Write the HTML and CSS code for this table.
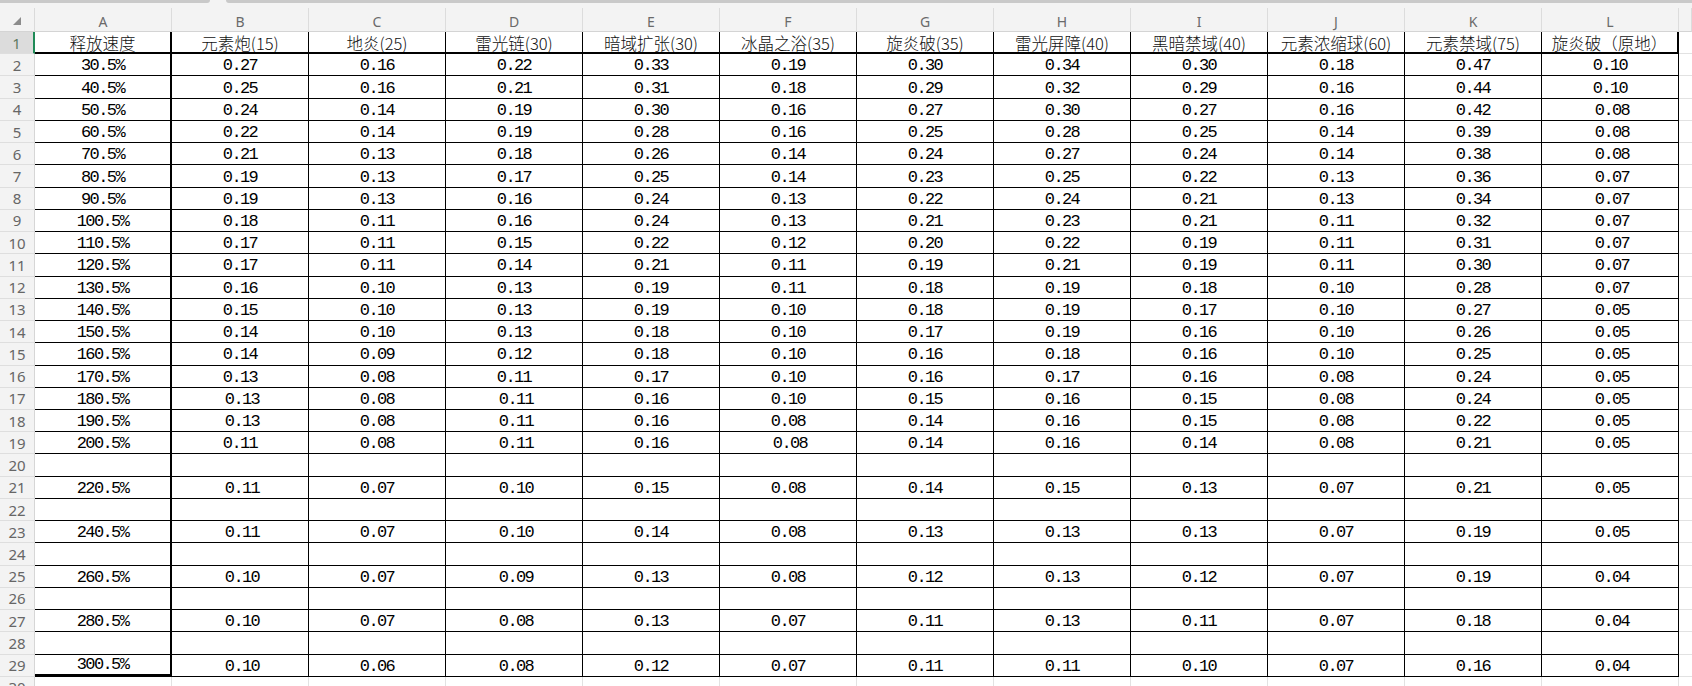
FILE: index.html
```html
<!DOCTYPE html>
<html lang="zh">
<head>
<meta charset="utf-8">
<title>释放速度</title>
<link rel="stylesheet" href="styles.css">
</head>
<body>
<div class="sheet">
  <div class="topbar"><div class="edge edge-name"></div><div class="edge edge-formula"></div></div>
  <div class="row colhead">
    <div class="corner"><span class="tri"></span></div>
    <div class="ch">A</div><div class="ch">B</div><div class="ch">C</div><div class="ch">D</div><div class="ch">E</div><div class="ch">F</div><div class="ch">G</div><div class="ch">H</div><div class="ch">I</div><div class="ch">J</div><div class="ch">K</div><div class="ch">L</div><div class="ch"></div>
  </div>
  <div class="row r1">
    <div class="rh sel">1</div>
    <div class="c a">释放速度</div><div class="c">元素炮(15)</div><div class="c">地炎(25)</div><div class="c">雷光链(30)</div><div class="c">暗域扩张(30)</div><div class="c">冰晶之浴(35)</div><div class="c">旋炎破(35)</div><div class="c">雷光屏障(40)</div><div class="c">黑暗禁域(40)</div><div class="c">元素浓缩球(60)</div><div class="c">元素禁域(75)</div><div class="c l">旋炎破（原地）</div><div class="x"></div>
  </div>
  <div class="row"><div class="rh">2</div><div class="c a">30.5%</div><div class="c">0.27</div><div class="c">0.16</div><div class="c">0.22</div><div class="c">0.33</div><div class="c">0.19</div><div class="c">0.30</div><div class="c">0.34</div><div class="c">0.30</div><div class="c">0.18</div><div class="c">0.47</div><div class="c l">0.10</div><div class="x"></div></div>
  <div class="row"><div class="rh">3</div><div class="c a">40.5%</div><div class="c">0.25</div><div class="c">0.16</div><div class="c">0.21</div><div class="c">0.31</div><div class="c">0.18</div><div class="c">0.29</div><div class="c">0.32</div><div class="c">0.29</div><div class="c">0.16</div><div class="c">0.44</div><div class="c l">0.10</div><div class="x"></div></div>
  <div class="row"><div class="rh">4</div><div class="c a">50.5%</div><div class="c">0.24</div><div class="c">0.14</div><div class="c">0.19</div><div class="c">0.30</div><div class="c">0.16</div><div class="c">0.27</div><div class="c">0.30</div><div class="c">0.27</div><div class="c">0.16</div><div class="c">0.42</div><div class="c l sh">0.08</div><div class="x"></div></div>
  <div class="row"><div class="rh">5</div><div class="c a">60.5%</div><div class="c">0.22</div><div class="c">0.14</div><div class="c">0.19</div><div class="c">0.28</div><div class="c">0.16</div><div class="c">0.25</div><div class="c">0.28</div><div class="c">0.25</div><div class="c">0.14</div><div class="c">0.39</div><div class="c l sh">0.08</div><div class="x"></div></div>
  <div class="row"><div class="rh">6</div><div class="c a">70.5%</div><div class="c">0.21</div><div class="c">0.13</div><div class="c">0.18</div><div class="c">0.26</div><div class="c">0.14</div><div class="c">0.24</div><div class="c">0.27</div><div class="c">0.24</div><div class="c">0.14</div><div class="c">0.38</div><div class="c l sh">0.08</div><div class="x"></div></div>
  <div class="row"><div class="rh">7</div><div class="c a">80.5%</div><div class="c">0.19</div><div class="c">0.13</div><div class="c">0.17</div><div class="c">0.25</div><div class="c">0.14</div><div class="c">0.23</div><div class="c">0.25</div><div class="c">0.22</div><div class="c">0.13</div><div class="c">0.36</div><div class="c l sh">0.07</div><div class="x"></div></div>
  <div class="row"><div class="rh">8</div><div class="c a">90.5%</div><div class="c">0.19</div><div class="c">0.13</div><div class="c">0.16</div><div class="c">0.24</div><div class="c">0.13</div><div class="c">0.22</div><div class="c">0.24</div><div class="c">0.21</div><div class="c">0.13</div><div class="c">0.34</div><div class="c l sh">0.07</div><div class="x"></div></div>
  <div class="row"><div class="rh">9</div><div class="c a">100.5%</div><div class="c">0.18</div><div class="c">0.11</div><div class="c">0.16</div><div class="c">0.24</div><div class="c">0.13</div><div class="c">0.21</div><div class="c">0.23</div><div class="c">0.21</div><div class="c">0.11</div><div class="c">0.32</div><div class="c l sh">0.07</div><div class="x"></div></div>
  <div class="row"><div class="rh">10</div><div class="c a">110.5%</div><div class="c">0.17</div><div class="c">0.11</div><div class="c">0.15</div><div class="c">0.22</div><div class="c">0.12</div><div class="c">0.20</div><div class="c">0.22</div><div class="c">0.19</div><div class="c">0.11</div><div class="c">0.31</div><div class="c l sh">0.07</div><div class="x"></div></div>
  <div class="row"><div class="rh">11</div><div class="c a">120.5%</div><div class="c">0.17</div><div class="c">0.11</div><div class="c">0.14</div><div class="c">0.21</div><div class="c">0.11</div><div class="c">0.19</div><div class="c">0.21</div><div class="c">0.19</div><div class="c">0.11</div><div class="c">0.30</div><div class="c l sh">0.07</div><div class="x"></div></div>
  <div class="row"><div class="rh">12</div><div class="c a">130.5%</div><div class="c">0.16</div><div class="c">0.10</div><div class="c">0.13</div><div class="c">0.19</div><div class="c">0.11</div><div class="c">0.18</div><div class="c">0.19</div><div class="c">0.18</div><div class="c">0.10</div><div class="c">0.28</div><div class="c l sh">0.07</div><div class="x"></div></div>
  <div class="row"><div class="rh">13</div><div class="c a">140.5%</div><div class="c">0.15</div><div class="c">0.10</div><div class="c">0.13</div><div class="c">0.19</div><div class="c">0.10</div><div class="c">0.18</div><div class="c">0.19</div><div class="c">0.17</div><div class="c">0.10</div><div class="c">0.27</div><div class="c l sh">0.05</div><div class="x"></div></div>
  <div class="row"><div class="rh">14</div><div class="c a">150.5%</div><div class="c">0.14</div><div class="c">0.10</div><div class="c">0.13</div><div class="c">0.18</div><div class="c">0.10</div><div class="c">0.17</div><div class="c">0.19</div><div class="c">0.16</div><div class="c">0.10</div><div class="c">0.26</div><div class="c l sh">0.05</div><div class="x"></div></div>
  <div class="row"><div class="rh">15</div><div class="c a">160.5%</div><div class="c">0.14</div><div class="c">0.09</div><div class="c">0.12</div><div class="c">0.18</div><div class="c">0.10</div><div class="c">0.16</div><div class="c">0.18</div><div class="c">0.16</div><div class="c">0.10</div><div class="c">0.25</div><div class="c l sh">0.05</div><div class="x"></div></div>
  <div class="row"><div class="rh">16</div><div class="c a">170.5%</div><div class="c">0.13</div><div class="c">0.08</div><div class="c">0.11</div><div class="c">0.17</div><div class="c">0.10</div><div class="c">0.16</div><div class="c">0.17</div><div class="c">0.16</div><div class="c">0.08</div><div class="c">0.24</div><div class="c l sh">0.05</div><div class="x"></div></div>
  <div class="row"><div class="rh">17</div><div class="c a">180.5%</div><div class="c sh">0.13</div><div class="c">0.08</div><div class="c sh">0.11</div><div class="c">0.16</div><div class="c">0.10</div><div class="c">0.15</div><div class="c">0.16</div><div class="c">0.15</div><div class="c">0.08</div><div class="c">0.24</div><div class="c l sh">0.05</div><div class="x"></div></div>
  <div class="row"><div class="rh">18</div><div class="c a">190.5%</div><div class="c sh">0.13</div><div class="c">0.08</div><div class="c sh">0.11</div><div class="c">0.16</div><div class="c">0.08</div><div class="c">0.14</div><div class="c">0.16</div><div class="c">0.15</div><div class="c">0.08</div><div class="c">0.22</div><div class="c l sh">0.05</div><div class="x"></div></div>
  <div class="row"><div class="rh">19</div><div class="c a">200.5%</div><div class="c">0.11</div><div class="c">0.08</div><div class="c sh">0.11</div><div class="c">0.16</div><div class="c sh">0.08</div><div class="c">0.14</div><div class="c">0.16</div><div class="c">0.14</div><div class="c">0.08</div><div class="c">0.21</div><div class="c l sh">0.05</div><div class="x"></div></div>
  <div class="row"><div class="rh">20</div><div class="c a"></div><div class="c"></div><div class="c"></div><div class="c"></div><div class="c"></div><div class="c"></div><div class="c"></div><div class="c"></div><div class="c"></div><div class="c"></div><div class="c"></div><div class="c l"></div><div class="x"></div></div>
  <div class="row"><div class="rh">21</div><div class="c a">220.5%</div><div class="c sh">0.11</div><div class="c">0.07</div><div class="c sh">0.10</div><div class="c">0.15</div><div class="c">0.08</div><div class="c">0.14</div><div class="c">0.15</div><div class="c">0.13</div><div class="c">0.07</div><div class="c">0.21</div><div class="c l sh">0.05</div><div class="x"></div></div>
  <div class="row"><div class="rh">22</div><div class="c a"></div><div class="c"></div><div class="c"></div><div class="c"></div><div class="c"></div><div class="c"></div><div class="c"></div><div class="c"></div><div class="c"></div><div class="c"></div><div class="c"></div><div class="c l"></div><div class="x"></div></div>
  <div class="row"><div class="rh">23</div><div class="c a">240.5%</div><div class="c sh">0.11</div><div class="c">0.07</div><div class="c sh">0.10</div><div class="c">0.14</div><div class="c">0.08</div><div class="c">0.13</div><div class="c">0.13</div><div class="c">0.13</div><div class="c">0.07</div><div class="c">0.19</div><div class="c l sh">0.05</div><div class="x"></div></div>
  <div class="row"><div class="rh">24</div><div class="c a"></div><div class="c"></div><div class="c"></div><div class="c"></div><div class="c"></div><div class="c"></div><div class="c"></div><div class="c"></div><div class="c"></div><div class="c"></div><div class="c"></div><div class="c l"></div><div class="x"></div></div>
  <div class="row"><div class="rh">25</div><div class="c a">260.5%</div><div class="c sh">0.10</div><div class="c">0.07</div><div class="c sh">0.09</div><div class="c">0.13</div><div class="c">0.08</div><div class="c">0.12</div><div class="c">0.13</div><div class="c">0.12</div><div class="c">0.07</div><div class="c">0.19</div><div class="c l sh">0.04</div><div class="x"></div></div>
  <div class="row"><div class="rh">26</div><div class="c a"></div><div class="c"></div><div class="c"></div><div class="c"></div><div class="c"></div><div class="c"></div><div class="c"></div><div class="c"></div><div class="c"></div><div class="c"></div><div class="c"></div><div class="c l"></div><div class="x"></div></div>
  <div class="row"><div class="rh">27</div><div class="c a">280.5%</div><div class="c sh">0.10</div><div class="c">0.07</div><div class="c sh">0.08</div><div class="c">0.13</div><div class="c">0.07</div><div class="c">0.11</div><div class="c">0.13</div><div class="c">0.11</div><div class="c">0.07</div><div class="c">0.18</div><div class="c l sh">0.04</div><div class="x"></div></div>
  <div class="row"><div class="rh">28</div><div class="c a"></div><div class="c"></div><div class="c"></div><div class="c"></div><div class="c"></div><div class="c"></div><div class="c"></div><div class="c"></div><div class="c"></div><div class="c"></div><div class="c"></div><div class="c l"></div><div class="x"></div></div>
  <div class="row r29"><div class="rh">29</div><div class="c a">300.5%</div><div class="c sh">0.10</div><div class="c">0.06</div><div class="c sh">0.08</div><div class="c">0.12</div><div class="c">0.07</div><div class="c">0.11</div><div class="c">0.11</div><div class="c">0.10</div><div class="c">0.07</div><div class="c">0.16</div><div class="c l sh">0.04</div><div class="x"></div></div>
  <div class="row"><div class="rh">30</div><div class="g"></div><div class="g"></div><div class="g"></div><div class="g"></div><div class="g"></div><div class="g"></div><div class="g"></div><div class="g"></div><div class="g"></div><div class="g"></div><div class="g"></div><div class="g"></div><div class="x"></div></div>
</div>
</body>
</html>
```

FILE: styles.css
```css
html, body {
  margin: 0;
  padding: 0;
  background: #ffffff;
  overflow: hidden;
}

.sheet {
  width: 1692px;
  height: 686px;
  overflow: hidden;
  background: #ffffff;
}

.topbar {
  height: 8px;
  display: flex;
  background: #f3f3f3;
}

.edge {
  height: 3px;
  background: #c9c9c9;
}

.edge-name {
  width: 210px;
  border-radius: 0 0 5px 0;
}

.edge-formula {
  flex: 1;
  margin-left: 16px;
  border-radius: 0 0 0 5px;
}

.row {
  display: grid;
  grid-template-columns: 35px repeat(12, 137px) 1fr;
  height: 22.24px;
}

.colhead {
  height: 24px;
  background: #f3f3f3;
}

.corner {
  border-right: 1px solid #dadada;
  border-bottom: 1px solid #d4d4d4;
  box-sizing: border-box;
  position: relative;
}

.tri {
  position: absolute;
  left: 13px;
  top: 9px;
  width: 0;
  height: 0;
  border-left: 8px solid transparent;
  border-bottom: 8px solid #8c8c8c;
}

.ch {
  box-sizing: border-box;
  border-right: 1px solid #dcdcdc;
  border-bottom: 1px solid #d4d4d4;
  font-family: "Noto Sans", "Liberation Sans", sans-serif;
  font-size: 14px;
  color: #6a6a6a;
  display: flex;
  align-items: center;
  justify-content: center;
  padding-top: 3px;
}

.rh {
  box-sizing: border-box;
  background: #f3f3f3;
  border-right: 1px solid #d6d6d6;
  border-bottom: 1px solid #dedede;
  font-family: "Noto Sans", "Liberation Sans", sans-serif;
  font-size: 15px;
  color: #666666;
  display: flex;
  align-items: center;
  justify-content: center;
}

.rh.sel {
  background: #dcdcdc;
  color: #5d7a62;
  border-right: 2px solid #1f8a57;
}

.c {
  box-sizing: border-box;
  border-right: 1px solid #000000;
  border-bottom: 1px solid #000000;
  font-family: "Liberation Mono", "Noto Sans CJK SC", monospace;
  font-size: 17px;
  letter-spacing: -1.6px;
  color: #000000;
  display: flex;
  align-items: center;
  justify-content: center;
  white-space: nowrap;
  overflow: hidden;
  padding-top: 2px;
}

.r1 .c {
  font-family: "Noto Sans CJK SC", sans-serif;
  font-weight: 300;
  font-size: 16.5px;
  letter-spacing: 0;
  color: #111111;
  padding-top: 1px;
  border-bottom: 2px solid #000000;
}

.c.a {
  border-right: 2px solid #000000;
}

.r1 .c.l {
  border-right: 2px solid #000000;
}

.r29 .c.a {
  border-bottom: 3px solid #000000;
  padding-top: 1px;
}

.c.sh {
  padding-left: 4px;
}

.x {
  box-sizing: border-box;
  border-bottom: 1px solid #e2e2e2;
}

.g {
  box-sizing: border-box;
  border-right: 1px solid #e2e2e2;
  border-bottom: 1px solid #e2e2e2;
}
```
